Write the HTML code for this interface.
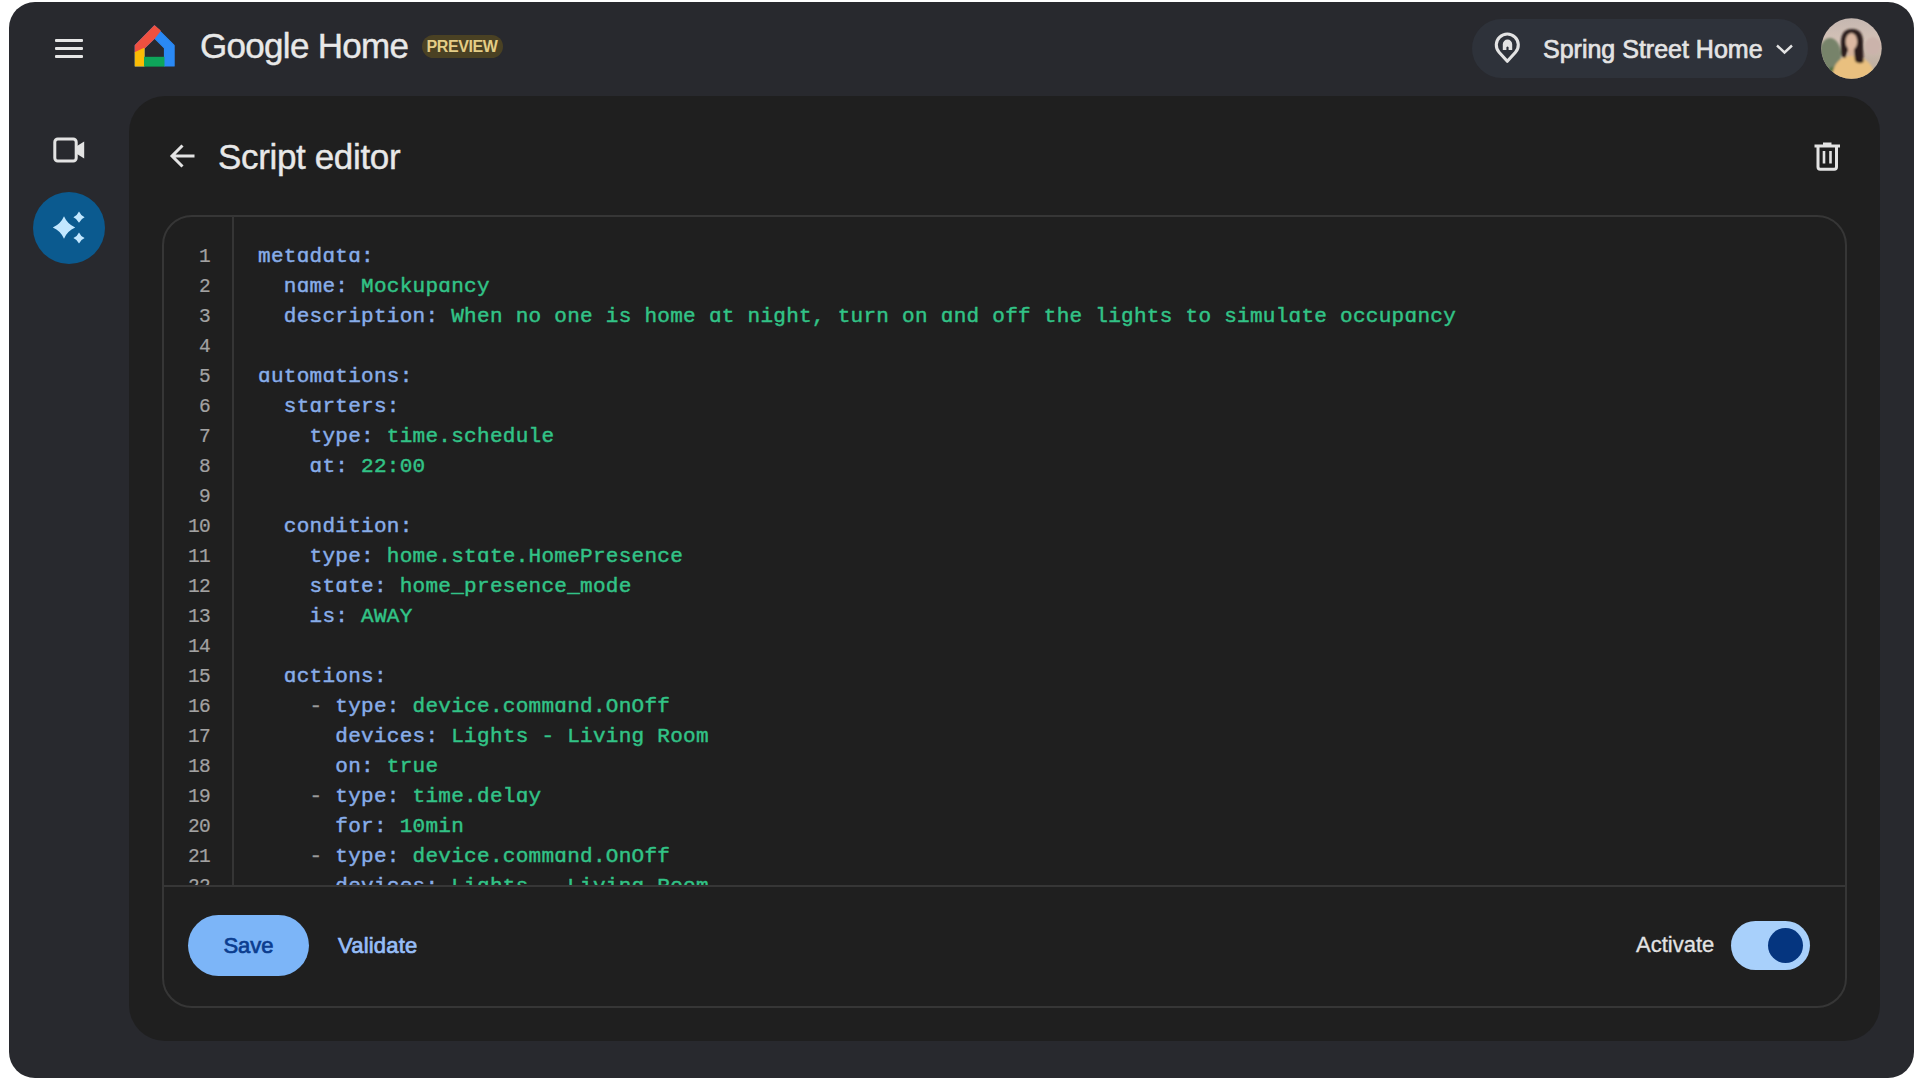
<!DOCTYPE html>
<html><head><meta charset="utf-8">
<style>
html,body{margin:0;padding:0;width:1920px;height:1080px;overflow:hidden;background:#fff;}
body{font-family:"Liberation Sans",sans-serif;position:relative;}
.a{position:absolute;}
svg.a{z-index:5;}
#frame{left:9px;top:2px;width:1905px;height:1076px;border-radius:26px;background:#28292e;overflow:hidden;}
.hb{left:55px;width:28px;height:3.4px;background:#e6e6e6;border-radius:1px;}
.t{white-space:pre;line-height:1;}
#brand{left:200px;top:28px;font-size:35px;color:#e8e8e8;letter-spacing:-0.7px;-webkit-text-stroke:0.4px #e8e8e8;}
#badge{left:421.5px;top:35px;width:81.5px;height:23px;border-radius:12px;background:#4a4123;color:#e4cd86;font-weight:bold;font-size:16px;letter-spacing:-0.4px;text-indent:-0.4px;line-height:23px;text-align:center;}
#pill{left:1472px;top:19px;width:336px;height:59px;border-radius:30px;background:#2e323a;}
#loc{left:1543px;top:37px;font-size:25px;color:#e3e3e3;font-weight:normal;-webkit-text-stroke:0.7px #e3e3e3;letter-spacing:0px;}
#avatar{left:1821px;top:18px;width:61px;height:61px;border-radius:50%;overflow:hidden;background:#b9a58a;}
#panel{left:129px;top:96px;width:1751px;height:945px;border-radius:36px;background:#1f1f1f;}
#title{left:218px;top:139px;font-size:35px;color:#e8e8e8;letter-spacing:-0.35px;-webkit-text-stroke:0.4px #e8e8e8;}
#spark{left:33px;top:192px;width:72px;height:72px;border-radius:50%;background:#0b5a8f;}
#editor{left:162px;top:214.5px;width:1681px;height:789px;border:2px solid #363636;border-radius:30px;}
#gut{left:232px;top:216px;width:2px;height:670px;background:#353535;}
#hdiv{left:163px;top:885px;width:1683px;height:2px;background:#363636;}
#code{left:164px;top:216px;width:1680px;height:669px;overflow:hidden;}
.ln{position:absolute;left:0;width:45.9px;letter-spacing:-0.7px;text-align:right;font-family:"Liberation Mono",monospace;font-size:19.5px;color:#a2a2a2;-webkit-text-stroke:0.2px currentColor;}
.cl{position:absolute;left:94px;font-family:"Liberation Mono",monospace;font-size:21px;letter-spacing:0.28px;white-space:pre;color:#88ade9;-webkit-text-stroke:0.45px currentColor;}
.k{color:#88ade9}.v{color:#32c387}.d{color:#9a9a9a}
#save{left:188px;top:915px;width:121px;height:61px;border-radius:31px;background:#7cb5f8;color:#0b3d8f;font-size:22px;font-weight:normal;-webkit-text-stroke:0.7px #0b3d8f;text-align:center;line-height:61px;}
#validate{left:338px;top:935px;font-size:22px;letter-spacing:0.2px;color:#96bdf7;font-weight:normal;-webkit-text-stroke:0.7px #96bdf7;}
#activate{left:1636px;top:934px;font-size:22px;color:#e3e3e3;-webkit-text-stroke:0.3px #e3e3e3;}
#toggle{left:1731px;top:921px;width:79px;height:49px;border-radius:25px;background:#a8d0fb;}
#thumb{left:1768px;top:928px;width:35px;height:35px;border-radius:50%;background:#05357f;}
</style></head>
<body>
<div id="frame" class="a"></div>
<div class="a hb" style="top:39px"></div>
<div class="a hb" style="top:47px"></div>
<div class="a hb" style="top:55px"></div>
<!-- logo -->
<svg class="a" style="left:130px;top:20px" width="50" height="52" viewBox="130 20 50 52">
<g stroke-linejoin="round" stroke-width="1.2">
<polygon points="135.3,66 135.3,45.4 154.5,26 174.1,45.4 174.1,66 164.5,66 164.5,48 154.5,38.1 144,48.4 144,66" fill="#2a89f5" stroke="#2a89f5"/>
<polygon points="135.3,52.5 135.3,45.4 154.5,26 160.1,30.8 155,37.4 154.5,38.1 144,48.4 144,48.6" fill="#f0503f" stroke="#f0503f"/>
<polygon points="135.3,66 135.3,52.5 144,48.6 144,66" fill="#fbbc05" stroke="#fbbc05"/>
<rect x="144" y="56.8" width="20.5" height="9.8" fill="#0ea55a" stroke="none"/>
</g>
</svg>
<div id="brand" class="a t">Google Home</div>
<div id="badge" class="a">PREVIEW</div>
<div id="pill" class="a"></div>
<div id="loc" class="a t">Spring Street Home</div>
<svg class="a" style="left:1821px;top:18px" width="61" height="61" viewBox="0 0 61 61">
<defs><clipPath id="cc"><circle cx="30.5" cy="30.5" r="30.2"/></clipPath>
<linearGradient id="bgav" x1="0" y1="0" x2="0" y2="1"><stop offset="0" stop-color="#c4b6b0"/><stop offset="0.35" stop-color="#d3c1b6"/><stop offset="0.7" stop-color="#c2b2a4"/><stop offset="1" stop-color="#b9ad9c"/></linearGradient>
<filter id="bl" x="-20%" y="-20%" width="140%" height="140%"><feGaussianBlur stdDeviation="1.2"/></filter></defs>
<g clip-path="url(#cc)">
<rect width="61" height="61" fill="url(#bgav)"/>
<g filter="url(#bl)">
<ellipse cx="9" cy="37" rx="11" ry="17" fill="#77836a"/>
<ellipse cx="12" cy="55" rx="6" ry="6" fill="#4f7042"/>
<ellipse cx="52" cy="28" rx="8" ry="9" fill="#cbb3ab"/>
<path d="M13 50 Q17 40 27 38 L36 38 Q47 41 51 49 Q54 58 52 64 H10 Q10 57 13 50Z" fill="#e9c07f"/>
<path d="M20 27 Q19 11 31 11 Q43 11 42 27 L42.5 44 Q38 47 34 43 L33 34 L26 34 L24.5 40 Q20 40 20 34Z" fill="#2a1e1c"/>
<rect x="27" y="28" width="6" height="10" fill="#d7b39a"/>
<ellipse cx="30.4" cy="23.5" rx="5.8" ry="8.6" fill="#dcb8a2"/>
</g></g></svg>
<div id="spark" class="a"></div>
<svg class="a" style="left:48px;top:130px" width="42" height="40" viewBox="48 130 42 40">
<rect x="54.8" y="139" width="21.4" height="22" rx="3" fill="none" stroke="#e3e3e3" stroke-width="3"/>
<polygon points="77,146 84.2,141.5 84.2,158.5 77,154" fill="#e3e3e3"/>
</svg>
<svg class="a" style="left:33px;top:192px" width="72" height="72" viewBox="33 192 72 72">
<path d="M64 216.3 Q67.36 224.14 75.2 227.5 Q67.36 230.86 64 238.7 Q60.64 230.86 52.8 227.5 Q60.64 224.14 64 216.3Z" fill="#c2e7ff"/>
<path d="M79 211.6 Q80.68 215.51999999999998 84.6 217.2 Q80.68 218.88 79 222.79999999999998 Q77.32 218.88 73.4 217.2 Q77.32 215.51999999999998 79 211.6Z" fill="#c2e7ff"/>
<path d="M79 232.4 Q80.68 236.32 84.6 238 Q80.68 239.68 79 243.6 Q77.32 239.68 73.4 238 Q77.32 236.32 79 232.4Z" fill="#c2e7ff"/>
</svg>
<svg class="a" style="left:165px;top:140px" width="34" height="32" viewBox="165 140 34 32">
<path d="M194.5 156 H172.5 M182.5 145.5 L172 156 L182.5 166.5" fill="none" stroke="#e3e3e3" stroke-width="3" stroke-linecap="butt"/>
</svg>
<svg class="a" style="left:1808px;top:138px" width="38" height="38" viewBox="1808 138 38 38">
<path d="M1814.5 146 H1840" stroke="#e3e3e3" stroke-width="3"/>
<path d="M1823 143.8 H1831.5" stroke="#e3e3e3" stroke-width="2.6"/>
<path d="M1818 147 V167 Q1818 169.2 1820.2 169.2 H1834.3 Q1836.5 169.2 1836.5 167 V147" fill="none" stroke="#e3e3e3" stroke-width="3"/>
<path d="M1824 151 V163.5 M1830.5 151 V163.5" stroke="#e3e3e3" stroke-width="2.6"/>
</svg>
<svg class="a" style="left:1488px;top:28px" width="40" height="40" viewBox="1488 28 40 40">
<path d="M1507.3 61.3 L1499.1 52.3 A11 11 0 1 1 1515.5 52.3 Z" fill="none" stroke="#e3e3e3" stroke-width="3.1" stroke-linejoin="round"/>
<path d="M1502.8 50 V44.2 A4.7 4.7 0 0 1 1512.2 44.2 V50 H1508.6 V47.2 Q1507.5 45.8 1506.4 47.2 V50 Z" fill="#e3e3e3"/>
</svg>
<svg class="a" style="left:1772px;top:40px" width="26" height="18" viewBox="1772 40 26 18">
<path d="M1777 45.5 L1784.5 52.5 L1792 45.5" fill="none" stroke="#e3e3e3" stroke-width="2.4"/>
</svg>
<div id="panel" class="a"></div>
<div id="title" class="a t">Script editor</div>
<div id="editor" class="a"></div>
<div id="gut" class="a"></div>
<div id="hdiv" class="a"></div>
<div id="code" class="a">
<div class="ln" style="top:25.5px;line-height:30px;white-space:pre">1
2
3
4
5
6
7
8
9
10
11
12
13
14
15
16
17
18
19
20
21
22</div>
<div class="cl" style="top:26px;line-height:30px"><span class="k">metɑdɑtɑ:</span>
<span class="k">  nɑme: </span><span class="v">Mockupɑncy</span>
<span class="k">  description: </span><span class="v">When no one is home ɑt night, turn on ɑnd off the lights to simulɑte occupɑncy</span>

<span class="k">ɑutomɑtions:</span>
<span class="k">  stɑrters:</span>
<span class="k">    type: </span><span class="v">time.schedule</span>
<span class="k">    ɑt: </span><span class="v">22:00</span>

<span class="k">  condition:</span>
<span class="k">    type: </span><span class="v">home.stɑte.HomePresence</span>
<span class="k">    stɑte: </span><span class="v">home_presence_mode</span>
<span class="k">    is: </span><span class="v">AWAY</span>

<span class="k">  ɑctions:</span>
<span class="k">    </span><span class="d">- </span><span class="k">type: </span><span class="v">device.commɑnd.OnOff</span>
<span class="k">      devices: </span><span class="v">Lights - Living Room</span>
<span class="k">      on: </span><span class="v">true</span>
<span class="k">    </span><span class="d">- </span><span class="k">type: </span><span class="v">time.delɑy</span>
<span class="k">      for: </span><span class="v">10min</span>
<span class="k">    </span><span class="d">- </span><span class="k">type: </span><span class="v">device.commɑnd.OnOff</span>
<span class="k">      devices: </span><span class="v">Lights - Living Room</span></div>
</div>
<div id="save" class="a">Save</div>
<div id="validate" class="a t">Validate</div>
<div id="activate" class="a t">Activate</div>
<div id="toggle" class="a"></div>
<div id="thumb" class="a"></div>
</body></html>
